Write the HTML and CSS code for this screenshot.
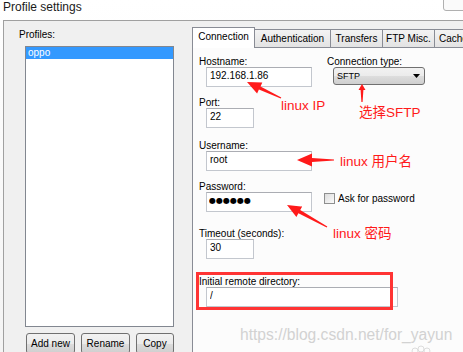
FILE: index.html
```html
<!DOCTYPE html>
<html lang="en">
<head>
  <meta charset="UTF-8">
  <title>Profile settings</title>
  <link rel="stylesheet" href="styles.css">
</head>
<body>
  <div class="window">
    <header class="titlebar">
      <span class="title">Profile settings</span>
      <span class="win-btn"></span>
    </header>

    <div class="frame">
      <aside class="profiles">
        <div class="label">Profiles:</div>
        <ul class="profile-list">
          <li class="selected">oppo</li>
        </ul>
        <div class="list-buttons">
          <button class="button add">Add new</button>
          <button class="button rename">Rename</button>
          <button class="button copy">Copy</button>
        </div>
      </aside>

      <section class="tabs">
        <nav class="tabstrip">
          <div class="tab active tab-conn">Connection</div>
          <div class="tab tab-auth">Authentication</div>
          <div class="tab tab-transfers">Transfers</div>
          <div class="tab tab-ftp">FTP Misc.</div>
          <div class="tab tab-cache">Cache</div>
        </nav>

        <div class="panel">
          <div class="row">
            <div class="field">
              <label class="label">Hostname:</label>
              <input class="textbox long" type="text" value="192.168.1.86">
            </div>
            <div class="field conn-type">
              <label class="label">Connection type:</label>
              <div class="combo">
                <span>SFTP</span>
                <svg class="combo-arrow" width="7" height="4" viewBox="0 0 7 4"><path d="M0 0h7L3.5 4z" fill="#000"/></svg>
              </div>
            </div>
          </div>

          <div class="field port">
            <label class="label">Port:</label>
            <input class="textbox short" type="text" value="22">
          </div>

          <div class="field user">
            <label class="label">Username:</label>
            <input class="textbox long" type="text" value="root">
          </div>

          <div class="row pass">
            <div class="field">
              <label class="label">Password:</label>
              <input class="textbox long dots" type="text" value="●●●●●●">
            </div>
            <label class="check">
              <span class="checkbox"></span>
              <span>Ask for password</span>
            </label>
          </div>

          <div class="field timeout">
            <label class="label">Timeout (seconds):</label>
            <input class="textbox short" type="text" value="30">
          </div>

          <div class="field initial">
            <label class="label">Initial remote directory:</label>
            <input class="textbox wide" type="text" value="/">
          </div>
        </div>
      </section>
    </div>

    <!-- red notes drawn over the screenshot -->
    <div class="annotations">
      <svg class="arrows" width="463" height="352" viewBox="0 0 463 352">
        <polygon points="281.3,97.5 260.5,86.4 262.3,82.6 247,82 257.1,93.4 258.9,89.6 280.7,98.5"/>
        <polygon points="362.6,102 363.4,90 365.5,90 362,84 358.5,90 360.6,90 361.4,102"/>
        <polygon points="334,159.4 312,158 312,153.5 297,160 312,166.5 312,162 334,160.6"/>
        <polygon points="327.3,226.5 300.2,210.1 302.2,206.5 287,205 296.4,217 298.4,213.3 326.7,227.5"/>
      </svg>
      <span class="note note-ip">linux IP</span>
      <span class="note note-sftp">选择SFTP</span>
      <span class="note note-user">linux 用户名</span>
      <span class="note note-pass">linux 密码</span>
      <div class="highlight-box"></div>
      <span class="watermark">https://blog.csdn.net/for_yayun</span>
      <svg class="paw" width="22" height="10" viewBox="0 0 22 10">
        <circle cx="5" cy="8" r="3" fill="none" stroke="#dcdcdc"/>
        <circle cx="11" cy="6" r="3" fill="none" stroke="#dcdcdc"/>
        <circle cx="17" cy="8" r="3" fill="none" stroke="#dcdcdc"/>
      </svg>
    </div>
  </div>
</body>
</html>
```

FILE: styles.css
```css
:root {
  --frame: #a0a0a0;
  --face: #f0f0f0;
  --tab-border: #898c95;
  --box-border: #c3c7ce;
  --note: #ff1a1a;
}

* {
  margin: 0;
  padding: 0;
  box-sizing: border-box;
}

body {
  font-family: 'Liberation Sans', Arial, sans-serif;
  font-size: 10px;
  color: #000;
  background: #f8f8f8;
}

.window {
  position: relative;
  width: 463px;
  height: 352px;
  overflow: hidden;
  background: linear-gradient(#ffffff, #f4f4f4);
}

.titlebar {
  height: 20px;
  padding-left: 3px;
  font-size: 12px;
  line-height: 14px;
  color: #1a1a1a;
}

.win-btn {
  position: absolute;
  top: -1px;
  left: 443px;
  width: 22px;
  height: 12px;
  border: 1px solid #b0b0b0;
  border-bottom-left-radius: 3px;
  background: #fafafa;
}

.frame {
  display: flex;
  height: 332px;
  margin-left: 3px;
  border-top: 1px solid var(--frame);
  border-left: 1px solid var(--frame);
  background: var(--face);
}

.label {
  display: block;
  line-height: 11px;
}

/* left column */

.profiles {
  width: 188px;
  flex-shrink: 0;
  padding: 8px 0 0 15px;
}

.profile-list {
  list-style: none;
  width: 149px;
  height: 281px;
  margin: 6px 0 0 6px;
  border: 1px solid #828790;
  background: #fff;
}

.profile-list li {
  height: 12px;
  padding-left: 2px;
  line-height: 12px;
}

.profile-list li.selected {
  background: #3399ff;
  color: #fff;
}

.list-buttons {
  display: flex;
  gap: 6px;
  margin: 6px 0 0 7px;
}

.button {
  height: 21px;
  border: 1px solid #707070;
  border-radius: 3px;
  background: linear-gradient(#f2f2f2 0%, #ebebeb 50%, #dddddd 51%, #cfcfcf 100%);
  font-family: inherit;
  font-size: 10px;
  line-height: 19px;
  color: #000;
}

.button.add,
.button.rename {
  width: 49px;
}

.button.copy {
  width: 38px;
}

/* tabs */

.tabs {
  flex: 1;
  min-width: 0;
  overflow: hidden;
}

.tabstrip {
  display: flex;
  align-items: flex-end;
  height: 26px;
}

.tab {
  flex-shrink: 0;
  height: 18px;
  padding-top: 3px;
  border: 1px solid var(--tab-border);
  border-bottom: none;
  margin-left: -1px;
  background: linear-gradient(#f3f3f3, #e3e3e3);
  line-height: 12px;
  text-align: center;
  white-space: nowrap;
}

.tab.active {
  z-index: 1;
  height: 21px;
  margin-left: 0;
  margin-bottom: -1px;
  padding-top: 3px;
  background: #fff;
}

.tab-conn { width: 63px; }
.tab-auth { width: 77px; }
.tab-transfers { width: 53px; }
.tab-ftp { width: 53px; }
.tab-cache { width: 40px; text-align: left; padding-left: 4px; }

.panel {
  height: 320px;
  padding: 8px 0 0 6px;
  border-top: 1px solid var(--tab-border);
  border-left: 1px solid var(--tab-border);
  background: #fcfcfc;
}

.row {
  display: flex;
  align-items: flex-start;
}

.textbox {
  display: block;
  height: 20px;
  margin-left: 7px;
  padding: 0 3px 4px;
  border: 1px solid var(--box-border);
  border-top-color: #abadb3;
  background: #fff;
  font-family: inherit;
  font-size: 10px;
  line-height: 14px;
  color: #000;
  outline: none;
}

.textbox.long { width: 106px; }
.textbox.short { width: 48px; }
.textbox.wide { width: 192px; }

.textbox.dots {
  font-family: 'DejaVu Sans', sans-serif;
  font-size: 8px;
  padding-left: 2px;
}

.conn-type {
  margin-left: 15px;
}

.combo {
  display: flex;
  align-items: center;
  justify-content: space-between;
  width: 92px;
  height: 18px;
  margin-left: 6px;
  padding: 0 4px 0 3px;
  border: 1px solid #707070;
  border-radius: 3px;
  background: linear-gradient(#f2f2f2 0%, #ebebeb 50%, #dddddd 51%, #cfcfcf 100%);
  font-size: 9px;
}

.port { margin-top: 10px; }
.user { margin-top: 12px; }
.pass { margin-top: 10px; }
.timeout { margin-top: 16px; }
.initial { margin-top: 17px; }

.check {
  display: flex;
  align-items: center;
  gap: 3px;
  margin: 12px 0 0 12px;
  line-height: 11px;
}

.checkbox {
  width: 11px;
  height: 11px;
  border: 1px solid #8e8f8f;
  background: linear-gradient(135deg, #dcdcdc, #fbfbfb);
}

/* annotations */

.annotations {
  position: absolute;
  inset: 0;
  pointer-events: none;
}

.arrows {
  position: absolute;
  top: 0;
  left: 0;
  fill: var(--note);
}

.note {
  position: absolute;
  font-family: 'Liberation Sans', 'Noto Sans CJK SC', sans-serif;
  font-size: 13.5px;
  line-height: 13.5px;
  color: var(--note);
  white-space: nowrap;
}

.note-ip { left: 281px; top: 99px; }
.note-sftp { left: 359px; top: 106px; }
.note-user { left: 340px; top: 155px; }
.note-pass { left: 333px; top: 227px; }

.highlight-box {
  position: absolute;
  left: 196px;
  top: 272px;
  width: 197px;
  height: 38px;
  border: 3px solid #ff3434;
}

.watermark {
  position: absolute;
  left: 240px;
  top: 327px;
  font-size: 15.6px;
  line-height: 15.6px;
  color: #d2d2d2;
  white-space: nowrap;
}

.paw {
  position: absolute;
  left: 410px;
  top: 343px;
}
```
